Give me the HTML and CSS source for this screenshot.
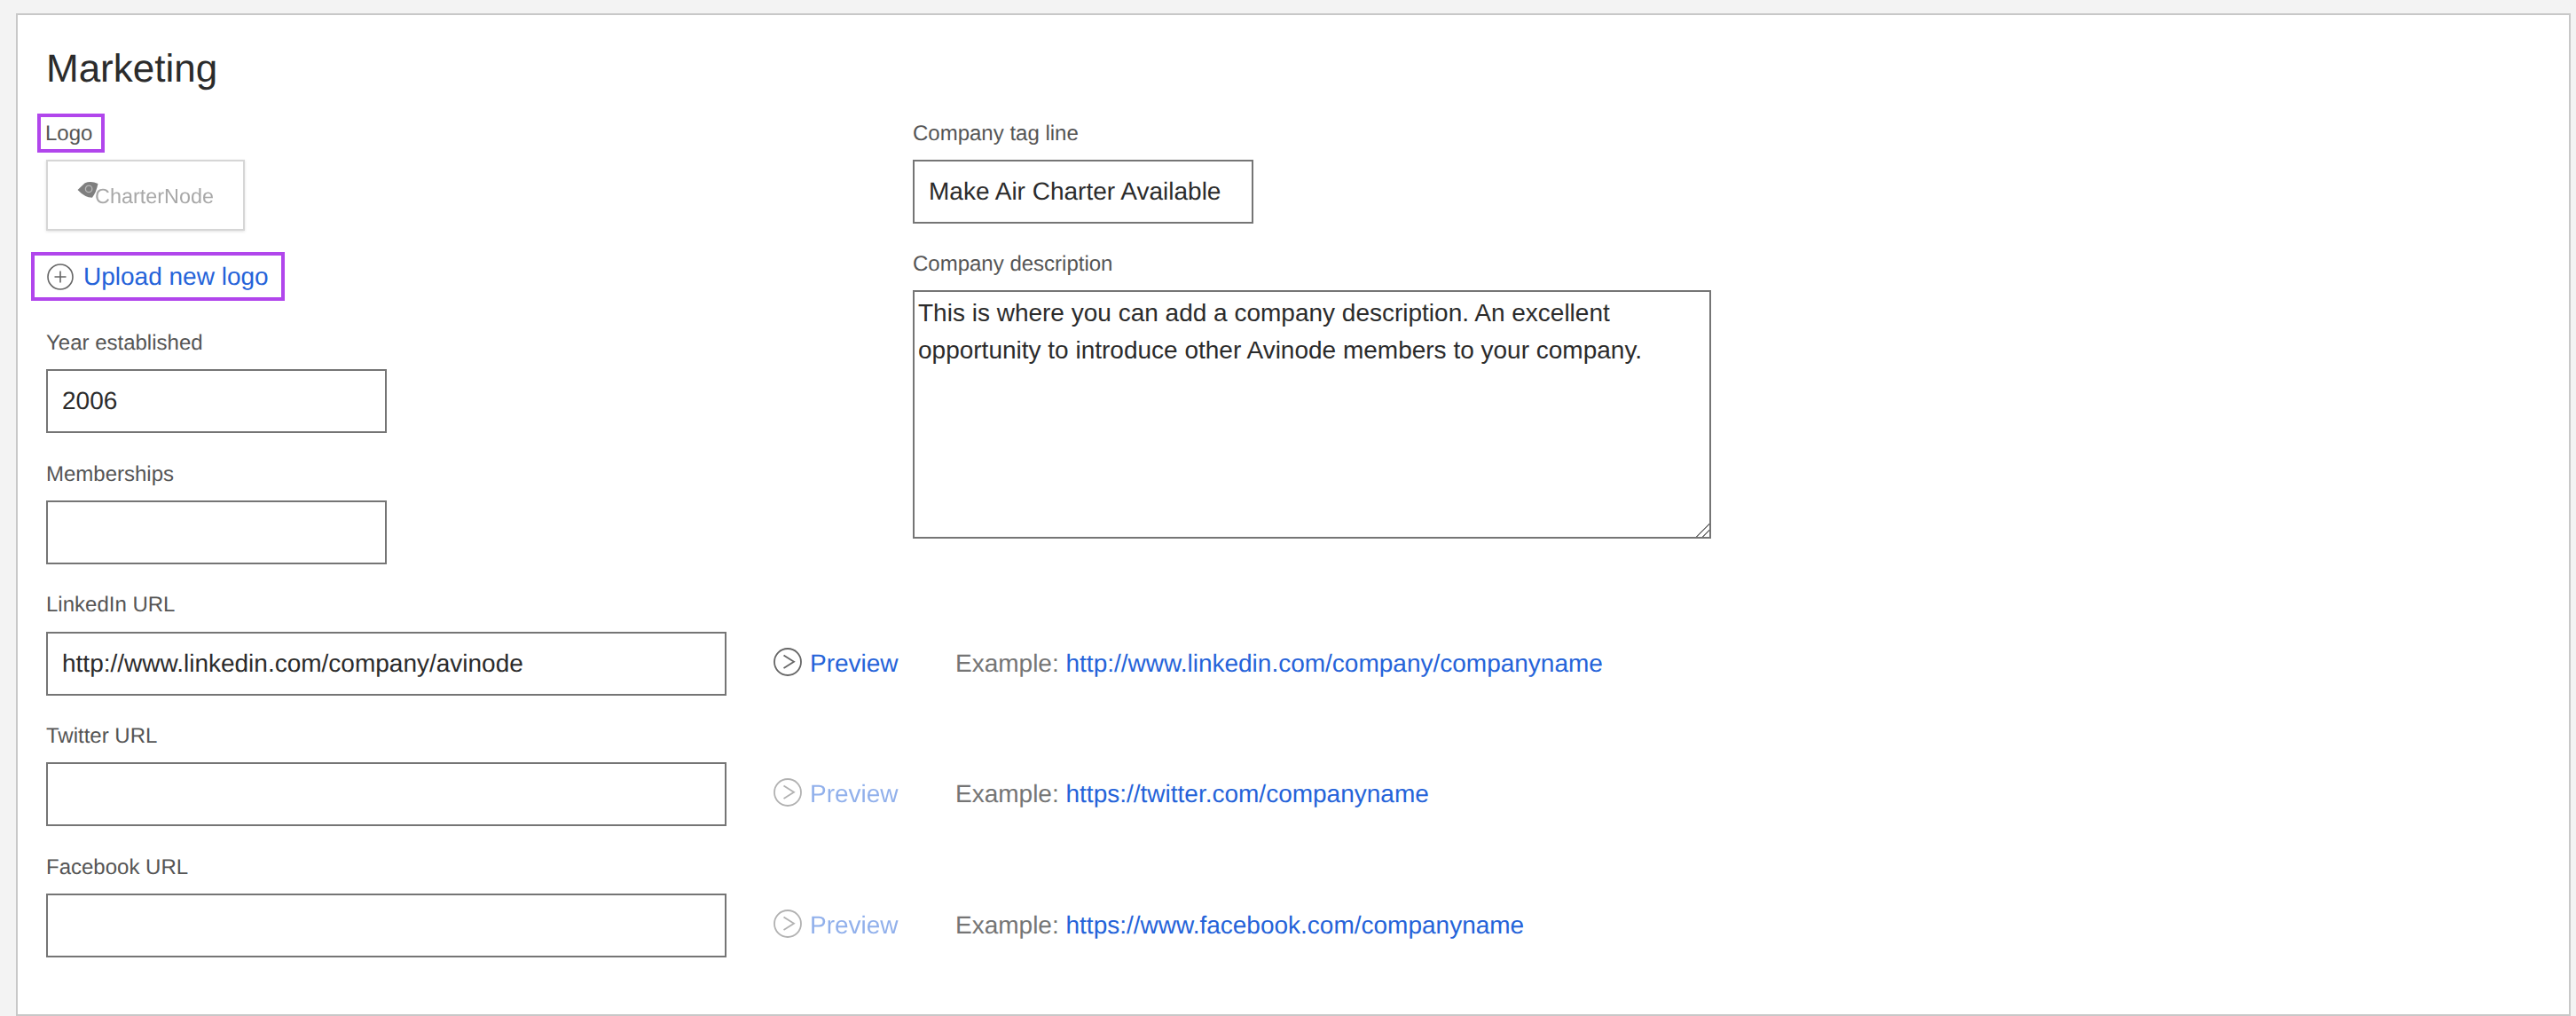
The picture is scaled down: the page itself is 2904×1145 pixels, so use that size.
FILE: index.html
```html
<!DOCTYPE html>
<html lang="en">
<head>
<meta charset="utf-8">
<title>Marketing</title>
<link rel="stylesheet" href="styles.css">
</head>
<body>
<main class="card">
  <h1 class="title">Marketing</h1>
  <div class="top">
    <div class="col-left">
      <div class="hl hl-logo">Logo</div>
      <div class="logo-box">
        <svg class="logo-mark" viewBox="0 0 22 18" width="24" height="20" aria-hidden="true"><path d="M0.5 9 L8 2 Q14 -0.5 21.5 2.5 Q20 11 15.5 17 Q8 17 0.5 9Z" fill="#7f7f7f"/><circle cx="12" cy="8" r="3.4" fill="none" stroke="#b8b8b8" stroke-width="1.2"/></svg>
        <span class="logo-text">CharterNode</span>
      </div>
      <a class="hl hl-upload">
        <svg class="ic" viewBox="0 0 30 30" width="30" height="30" aria-hidden="true"><circle cx="15" cy="15" r="14" fill="none" stroke="#666" stroke-width="1.6"/><path d="M15 8.5v13M8.5 15h13" stroke="#666" stroke-width="1.6" fill="none"/></svg>
        <span class="link">Upload new logo</span>
      </a>
      <label class="label l-year">Year established</label>
      <div class="input short">2006</div>
      <label class="label">Memberships</label>
      <div class="input short"></div>
    </div>
    <div class="col-right">
      <label class="label l-tag">Company tag line</label>
      <div class="input tag">Make Air Charter Available</div>
      <label class="label">Company description</label>
      <textarea class="desc">This is where you can add a company description. An excellent opportunity to introduce other Avinode members to your company.</textarea>
    </div>
  </div>
  <label class="label">LinkedIn URL</label>
  <div class="url-row">
    <div class="input long">http://www.linkedin.com/company/avinode</div>
    <a class="preview">
      <svg class="ic-p" viewBox="0 0 32 32" width="32" height="32" aria-hidden="true"><circle cx="16" cy="16" r="15" fill="none" stroke="#666" stroke-width="1.8"/><path d="M11.5 8.5 23 15.8 11.5 23" fill="none" stroke="#666" stroke-width="1.8"/></svg>
      <span class="link">Preview</span>
    </a>
    <span class="example">Example: <a class="link">http://www.linkedin.com/company/companyname</a></span>
  </div>
  <label class="label">Twitter URL</label>
  <div class="url-row">
    <div class="input long"></div>
    <a class="preview off">
      <svg class="ic-p" viewBox="0 0 32 32" width="32" height="32" aria-hidden="true"><circle cx="16" cy="16" r="15" fill="none" stroke="#666" stroke-width="1.8"/><path d="M11.5 8.5 23 15.8 11.5 23" fill="none" stroke="#666" stroke-width="1.8"/></svg>
      <span class="link">Preview</span>
    </a>
    <span class="example">Example: <a class="link">https://twitter.com/companyname</a></span>
  </div>
  <label class="label">Facebook URL</label>
  <div class="url-row">
    <div class="input long"></div>
    <a class="preview off">
      <svg class="ic-p" viewBox="0 0 32 32" width="32" height="32" aria-hidden="true"><circle cx="16" cy="16" r="15" fill="none" stroke="#666" stroke-width="1.8"/><path d="M11.5 8.5 23 15.8 11.5 23" fill="none" stroke="#666" stroke-width="1.8"/></svg>
      <span class="link">Preview</span>
    </a>
    <span class="example">Example: <a class="link">https://www.facebook.com/companyname</a></span>
  </div>
</main>
</body>
</html>
```
FILE: styles.css
```css
* { box-sizing: border-box; }
html, body { margin: 0; height: 100%; }
body {
  background: #f3f3f3;
  font-family: "Liberation Sans", Arial, sans-serif;
  text-rendering: geometricPrecision;
  padding: 15px 6px 0 18px;
  overflow: hidden;
  height: 1145px;
}
.card {
  background: #fff;
  border: 2px solid #c8c8c8;
  height: 1130px;
  padding: 35px 32px 0;
}
.title {
  margin: 0;
  font-size: 44px;
  font-weight: 400;
  line-height: 51px;
  color: #2b2b2b;
}
.top { display: flex; }
.col-left { width: 977px; flex: none; }
.label {
  display: block;
  font-size: 24px;
  line-height: 32px;
  color: #555;
  margin: 30.4px 0 13.2px;
}
.hl { border: 4px solid #b146ec; display: flex; align-items: center; }
.hl-logo {
  margin: 25px 0 0 -10px;
  width: 76px;
  height: 44px;
  padding: 1px 0 0 5px;
  font-size: 24px;
  color: #555;
}
.logo-box {
  width: 224px;
  height: 80px;
  margin-top: 8px;
  border: 2px solid #d6d6d6;
  box-shadow: 0 1px 3px rgba(0,0,0,.12);
  display: flex;
  align-items: center;
  padding-left: 33px;
}
.logo-mark { flex: none; margin-top: -13px; filter: blur(.6px); }
.logo-text {
  margin: 2px 0 0 -4px;
  font-size: 23.4px;
  color: #a8a8a8;
  filter: blur(.6px);
}
.hl-upload {
  margin: 24px 0 0 -17px;
  width: 286px;
  height: 55px;
  padding-left: 14px;
  gap: 11px;
  font-size: 28px;
}
.ic { flex: none; }
.link { color: #2563d9; }
.l-year { margin-top: 32.3px; }
.input {
  border: 2px solid #757575;
  height: 72px;
  font-size: 28px;
  line-height: 67px;
  padding: 0 16px;
  color: #2b2b2b;
  background: #fff;
  white-space: nowrap;
}
.short { width: 384px; }
.tag { width: 384px; }
.long { width: 767px; flex: none; }
.l-tag { margin-top: 31.6px; }
.desc {
  display: block;
  width: 900px;
  height: 280px;
  border: 2px solid #757575;
  border-radius: 0;
  font: 28px/42px "Liberation Sans", Arial, sans-serif;
  color: #2b2b2b;
  padding: 3px 4px;
  outline: none;
}
.desc::-webkit-resizer {
  background: linear-gradient(135deg, transparent 47%, #777 47% 55%, transparent 55% 72%, #777 72% 80%, transparent 80%);
}
.url-row { display: flex; align-items: center; }
.preview {
  display: flex;
  align-items: center;
  gap: 9px;
  margin-left: 53px;
  font-size: 28px;
  width: 141px;
  flex: none;
}
.ic-p { flex: none; margin-bottom: 4px; }
.off { opacity: .5; }
.example { margin-left: 64px; font-size: 28px; color: #757575; white-space: nowrap; }
```
